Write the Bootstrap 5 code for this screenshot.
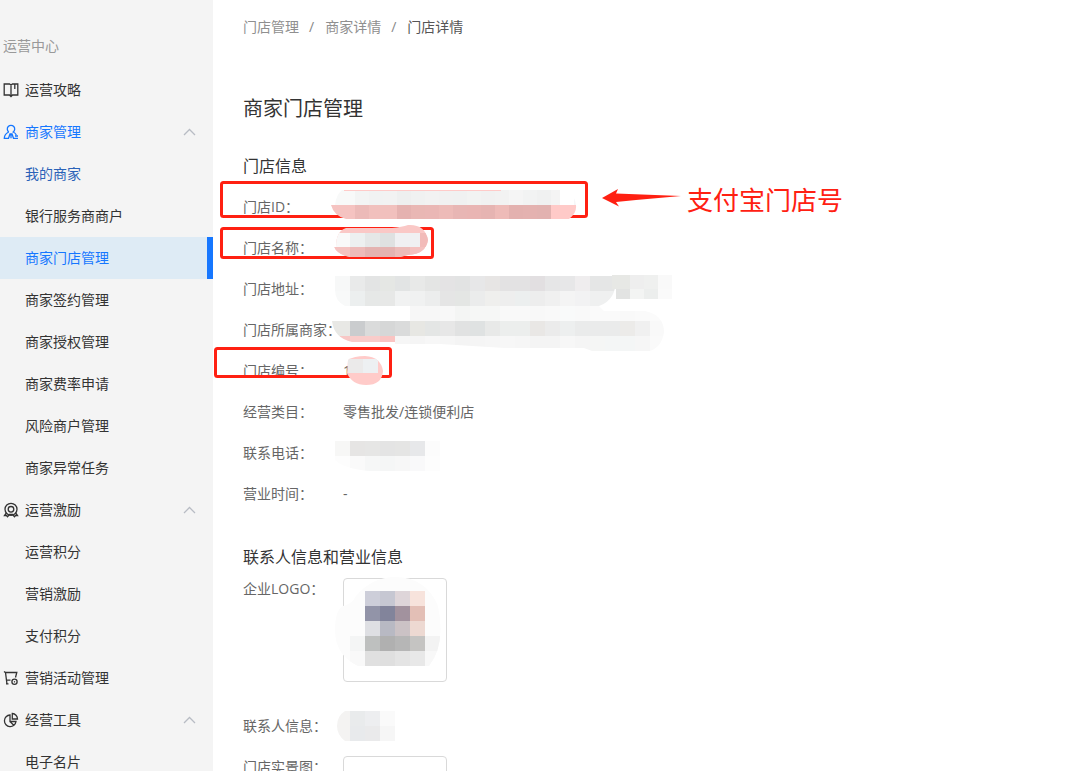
<!DOCTYPE html>
<html lang="zh-CN">
<head>
<meta charset="utf-8">
<meta name="viewport" content="width=device-width, initial-scale=1">
<title>门店详情</title>
<link rel="stylesheet" href="https://cdn.jsdelivr.net/npm/bootstrap@5.3.0/dist/css/bootstrap.min.css">
<style>
  body { font-family: "Open Sans", "Noto Sans CJK SC", sans-serif; font-size: 14px; line-height: 22px; color: #666; background: #fff; }
  a { text-decoration: none; }
  .side { width: 213px; background: #f4f4f4; padding-top: 24px; }
  .side-title { height: 43px; margin-bottom: 2px; padding-left: 3px; color: #999; }
  .side .nav-link { height: 42px; padding: 0 17px 0 25px; color: #333; display: flex; align-items: center; }
  .side .nav-link.top-item { padding-left: 3px; }
  .side .nav-link.open { color: #1677ff; }
  .side .nav-link.hover { color: #2a62b8; }
  .side .nav-link.active { color: #1677ff; background: #deebf5; border-right: 6px solid #1677ff; }
  .side .ico { width: 16px; height: 16px; margin-right: 6px; fill: none; stroke: currentColor; stroke-width: 1.3; }
  .side .chev { width: 13px; height: 8px; margin-left: auto; fill: none; stroke: #b8bcc4; stroke-width: 1.3; }
  .content { padding: 16px 30px 0; }
  .breadcrumb { --bs-breadcrumb-item-padding-x: 10px; --bs-breadcrumb-divider-color: #888; margin-bottom: 57px; }
  .breadcrumb-item + .breadcrumb-item::before { padding-right: 11px; }
  .breadcrumb a { color: #8f8f8f; }
  .breadcrumb .active { color: #555; }
  h1 { font-size: 20px; line-height: 28px; font-weight: 400; color: #333; margin-bottom: 31px; }
  h2 { font-size: 16px; line-height: 24px; font-weight: 400; color: #333; margin-bottom: 9px; }
  .info { margin-bottom: 40px; }
  .info-store { padding-top: 9px; }
  .info-line { margin-bottom: 19px; }
  .info-line dt { width: 100px; font-weight: 400; white-space: nowrap; }
  .info-line dd { margin: 0; }
  .info-logo { margin-bottom: 33px; }
  .thumb { width: 104px; height: 104px; border: 1px solid #d9d9d9; border-radius: 4px; }
  .marks { position: absolute; left: 0; top: 0; overflow: visible; pointer-events: none; }
  .marks text { font-size: 26px; fill: #ff2012; }
</style>
</head>
<body>
<div class="d-flex vh-100 overflow-hidden">
  <aside class="side flex-shrink-0 overflow-hidden">
    <div class="side-title d-flex align-items-center">运营中心</div>
    <nav class="nav flex-column flex-nowrap">
      <a class="nav-link top-item" href="#"><svg class="ico" viewBox="0 0 16 16"><path d="M8 2.500v12M1.200 2V13H6.500L8 14.500L9.500 13H14.800V2H9.500L8 3L6.500 2ZM11.800 2v5"/></svg>运营攻略</a>
      <a class="nav-link top-item open" href="#"><svg class="ico" viewBox="0 0 16 16"><path d="M5.800 8A3.700 3.700 0 1 1 10.200 8Q12.500 9 13.300 11M5.800 8Q1.500 9.800 1.300 14.300H5.500L7 10H9L10.500 14.300H15M12 12h3M8 10v4.300"/></svg>商家管理<svg class="chev" viewBox="0 0 13 8"><path d="M1 7L6.500 1.500L12 7"/></svg></a>
      <a class="nav-link hover" href="#">我的商家</a>
      <a class="nav-link" href="#">银行服务商商户</a>
      <a class="nav-link active" href="#" aria-current="page">商家门店管理</a>
      <a class="nav-link" href="#">商家签约管理</a>
      <a class="nav-link" href="#">商家授权管理</a>
      <a class="nav-link" href="#">商家费率申请</a>
      <a class="nav-link" href="#">风险商户管理</a>
      <a class="nav-link" href="#">商家异常任务</a>
      <a class="nav-link top-item" href="#"><svg class="ico" viewBox="0 0 16 16"><circle cx="8" cy="7.300" r="6"/><circle cx="8" cy="7.300" r="2.800"/><path d="M3.300 11L1.500 13.500H3.500L4.500 14.700L6.500 12.500H9.500L11.500 14.700L12.500 13.500H14.500L12.700 11"/></svg>运营激励<svg class="chev" viewBox="0 0 13 8"><path d="M1 7L6.500 1.500L12 7"/></svg></a>
      <a class="nav-link" href="#">运营积分</a>
      <a class="nav-link" href="#">营销激励</a>
      <a class="nav-link" href="#">支付积分</a>
      <a class="nav-link top-item" href="#"><svg class="ico" viewBox="0 0 16 16"><path d="M1 1.500L2.500 2.500H13.800L12.500 7.500M2.500 2.500L4 14.300M3.500 10.200H7.500M3 13.800h2.500"/><circle cx="11.500" cy="11.800" r="2.600"/><path d="M10.900 11.800h1.200"/></svg>营销活动管理</a>
      <a class="nav-link top-item" href="#"><svg class="ico" viewBox="0 0 16 16"><path d="M7 3A5.800 5.800 0 1 0 13 9.500H7ZM9.300 1.500V7H14.500A5.500 5.500 0 0 0 9.300 1.500ZM7 9.500L11 13.500"/></svg>经营工具<svg class="chev" viewBox="0 0 13 8"><path d="M1 7L6.500 1.500L12 7"/></svg></a>
      <a class="nav-link" href="#">电子名片</a>
    </nav>
  </aside>

  <main class="content flex-grow-1 position-relative overflow-hidden">
    <nav aria-label="breadcrumb">
      <ol class="breadcrumb">
        <li class="breadcrumb-item"><a href="#">门店管理</a></li>
        <li class="breadcrumb-item"><a href="#">商家详情</a></li>
        <li class="breadcrumb-item active" aria-current="page">门店详情</li>
      </ol>
    </nav>
    <h1>商家门店管理</h1>

    <h2>门店信息</h2>
    <dl class="info info-store">
      <div class="info-line d-flex"><dt>门店ID：</dt><dd></dd></div>
      <div class="info-line d-flex"><dt>门店名称：</dt><dd></dd></div>
      <div class="info-line d-flex"><dt>门店地址：</dt><dd></dd></div>
      <div class="info-line d-flex"><dt>门店所属商家：</dt><dd></dd></div>
      <div class="info-line d-flex"><dt>门店编号：</dt><dd>1</dd></div>
      <div class="info-line d-flex"><dt>经营类目：</dt><dd>零售批发/连锁便利店</dd></div>
      <div class="info-line d-flex"><dt>联系电话：</dt><dd></dd></div>
      <div class="info-line d-flex"><dt>营业时间：</dt><dd>-</dd></div>
    </dl>

    <h2>联系人信息和营业信息</h2>
    <dl class="info">
      <div class="info-line info-logo d-flex"><dt>企业LOGO：</dt><dd class="thumb"></dd></div>
      <div class="info-line d-flex"><dt>联系人信息：</dt><dd></dd></div>
      <div class="info-line d-flex"><dt>门店实景图：</dt><dd class="thumb"></dd></div>
    </dl>

    <!-- Red marks and the mosaics that hide private values -->
    <svg class="marks" width="660" height="771" viewBox="213 0 660 771">
      <defs>
        <clipPath id="c-id"><path d="M342 190H560V205H574V198Q580 211 569 219H346Q334 216 331 205H335Q336 195 342 190Z"/></clipPath>
        <clipPath id="c-name"><path d="M346 228H392Q402 227 408 225Q425 224 428 240Q426 254 408 255L400 257H350Q338 255 334 247H336Q336 231 346 228Z"/></clipPath>
        <clipPath id="c-addr"><path d="M335 276H616Q617 300 599 306H345Q335 301 335 290Z"/></clipPath>
        <clipPath id="c-own"><path d="M332 321H410V306H599L604 311H645Q664 315 664 332Q662 347 650 351H592L584 348H505L440 344H395V342H352Q334 338 332 321Z"/></clipPath>
        <clipPath id="c-no"><path d="M348 360Q354 356 365 356Q381 357 383 371Q382 385 366 385Q352 385 347 373Z"/></clipPath>
        <clipPath id="c-tel"><path d="M335 441H440V471H370Q344 469 335 460Z"/></clipPath>
        <clipPath id="c-logo"><path d="M343 606Q352 604 356 596Q372 577 395 577Q426 577 438 606Q446 645 429 666H358Q335 655 335 630Q335 610 343 606Z"/></clipPath>
        <clipPath id="c-man"><path d="M345 711H395V741H345Q337 735 337 726Q337 716 345 711Z"/></clipPath>
      </defs>
      <g fill="none" stroke="#ff2012" stroke-width="3">
        <rect x="221.500" y="182.500" width="365" height="34" rx="2"/>
        <rect x="221.500" y="228.500" width="211" height="29" rx="2"/>
        <rect x="215.500" y="348.500" width="175" height="28" rx="2"/>
      </g>
      <path fill="#ff2012" d="M602 198L618 189L616 193.500L681 196L636 200L616 202L619 206.500Z"/>
      <text x="687" y="210">支付宝门店号</text>
      <g id="mosaics" shape-rendering="crispEdges"></g>
      <path stroke="#ffcbc9" d="M344 190.500H501"/>
    </svg>
  </main>
</div>
<script src="https://cdn.jsdelivr.net/npm/bootstrap@5.3.0/dist/js/bootstrap.bundle.min.js"></script>
<script>
  // Each mosaic row: clip id, left, top, cell width, height, colours from left to right
  const rows = [
    ['c-id', 331, 190, 24, 15, 'f8f9f9'], ['c-id', 355, 190, 14, 15, 'f3f4f4 f1f2f2 f2f2f2 eeefef f0f1f1 f2f2f2 f1f1f1 f0f1f1 f2f3f2 f1f1f1 f2f2f2 f5f5f5 f2f3f3 f0f1f1 f4f4f4 f6f6f7 fdfdfd'],
    ['c-id', 331, 205, 24, 14, 'f5c3c1'], ['c-id', 355, 205, 14, 14, 'ecbab8 f1c0bd f1c0bd e5b2b0 e9b7b4 eab7b5 edbbb8 e8b6b4 e9b5b3 e6b4b2 eebbb8 e3b1af e4b2b0 e2b2b0 ffcac8 ffcac8'],
    ['c-name', 330, 224, 105, 35, 'fac8c6'],
    ['c-name', 335, 233, 15, 14, 'f9f9f9 edf0f0 e5e7e7 dfe1e1 f0f0f2 f0f0f2'],
    ['c-name', 335, 247, 15, 11, 'f4c3c1 edbbb9 e4b3b1 e4b3b1 ecbcb9 f4c1bf'],
    ['c-name', 420, 233, 10, 14, 'f2bbb9'],
    ['c-addr', 335, 276, 15, 15, 'f7f8f8 e9eaea e3e4e4 e5e7e4 e2e4e4 e8e9e8 e4e5e4 e4e3e4 e2e3e3 e7e7e8 e7e5e4 e3e2e3 e3e2e3 e2dfe1 e6e6e7 e7e7e8 efedee e5e6e6 e5e6e6'],
    ['c-addr', 335, 291, 15, 15, 'f8f9f9 ecefef e6e8e7 e7e8e7 f1f2f2 f0f1f1 eceded e5e5e5 e4e6e4 ebecec efefed eeeeee ecefef ededed f0f0f0 f4f4f4 f2f2f3 eff0f0 eff0f0'],
    ['', 612, 275, 18, 14, 'e7e8e5'], ['', 630, 275, 14, 14, 'eeeeee eff0ef f9f9f9'], ['', 616, 289, 14, 10, 'e2e3e2 f3f4f3 eceeed fafafa'],
    ['c-own', 410, 306, 15, 15, 'f7f7f7 f7f7f7 f8f8f8 f4f5f4 f6f7f6 f6f7f6 f9f9f9 f9f9f9 f8f8f8 f9f9f9 f9fafa f9f9f9 fafafa fafafa f9f9f9 fafafa fbfbfb'],
    ['c-own', 330, 321, 20, 15, 'e8e8e5'], ['c-own', 350, 321, 15, 15, 'caccce dadbdb d6d7d7 dadbdb e7e7e3 e4e6e5 e7e7e7 e1e2e2 dfe2e2 e8e9e8 eceeed eceeed e9e7e5 ebebeb edefef eaebeb eaebeb eaebeb ecebe9 f0f0f0 f9f9f9'],
    ['c-own', 330, 336, 20, 15, 'f8c7c5'], ['c-own', 350, 336, 15, 15, 'f9ccca f9ccca fac4c2 f6f6f6 f5f5f5 f7f7f7 f6f6f6 f4f4f4 f5f5f5 f6f6f6 f7f7f7 f6f6f6 f4f4f4 f4f4f4 f7f7f7 f5f5f5 f5f6f5 f4f6f6 f4f6f6 f6f6f6 fafafa'],
    ['c-no', 345, 355, 40, 31, 'ffcbc9'], ['c-no', 348, 359, 15, 14, 'ebeaea edf0f2'],
    ['c-tel', 335, 441, 15, 15, 'f7f7f6 e6e5e4 e6e6e5 e4e4e4 e5e5e4 e7e8ea fcfcfc'],
    ['c-tel', 335, 456, 15, 15, 'fdfdfd fafafa f6f7f7 f5f6f6 f7f7f7 f9f9fa fdfdfd'],
    ['c-logo', 335, 576, 110, 91, 'fcfcfc'],
    ['c-logo', 365, 591, 15, 15, 'cdced9 c6c7d2 ded5d9 f7e3dc'],
    ['c-logo', 365, 606, 15, 15, '9294a8 82849b a2929e e3bfb6'],
    ['c-logo', 365, 621, 15, 15, 'dedfe3 b8b9c3 cbc2c5 edd9d2'],
    ['c-logo', 350, 636, 15, 15, 'f4f5f5 bec0bf b0b0b0 b6b6b6 c5c4c2 f3f3f3'],
    ['c-logo', 350, 651, 15, 15, 'f9f9f9 e0e0e0 dfdfdf e4e4e4 e8e8e8 f8f8f8'],
    ['c-man', 335, 711, 15, 15, 'f4f3f2 e9ebec edeef0 fafafa'], ['c-man', 335, 726, 15, 15, 'f4f3f2 e8eaec eaeaeb f6f6f6']
  ];
  document.getElementById('mosaics').innerHTML = rows.map(([clip, x, y, w, h, colours]) =>
    `<g${clip ? ` clip-path="url(#${clip})"` : ''}>` +
    colours.split(' ').map((c, i) => `<rect x="${x + i * w}" y="${y}" width="${w}" height="${h}" fill="#${c}"/>`).join('') +
    '</g>').join('');
</script>
</body>
</html>
